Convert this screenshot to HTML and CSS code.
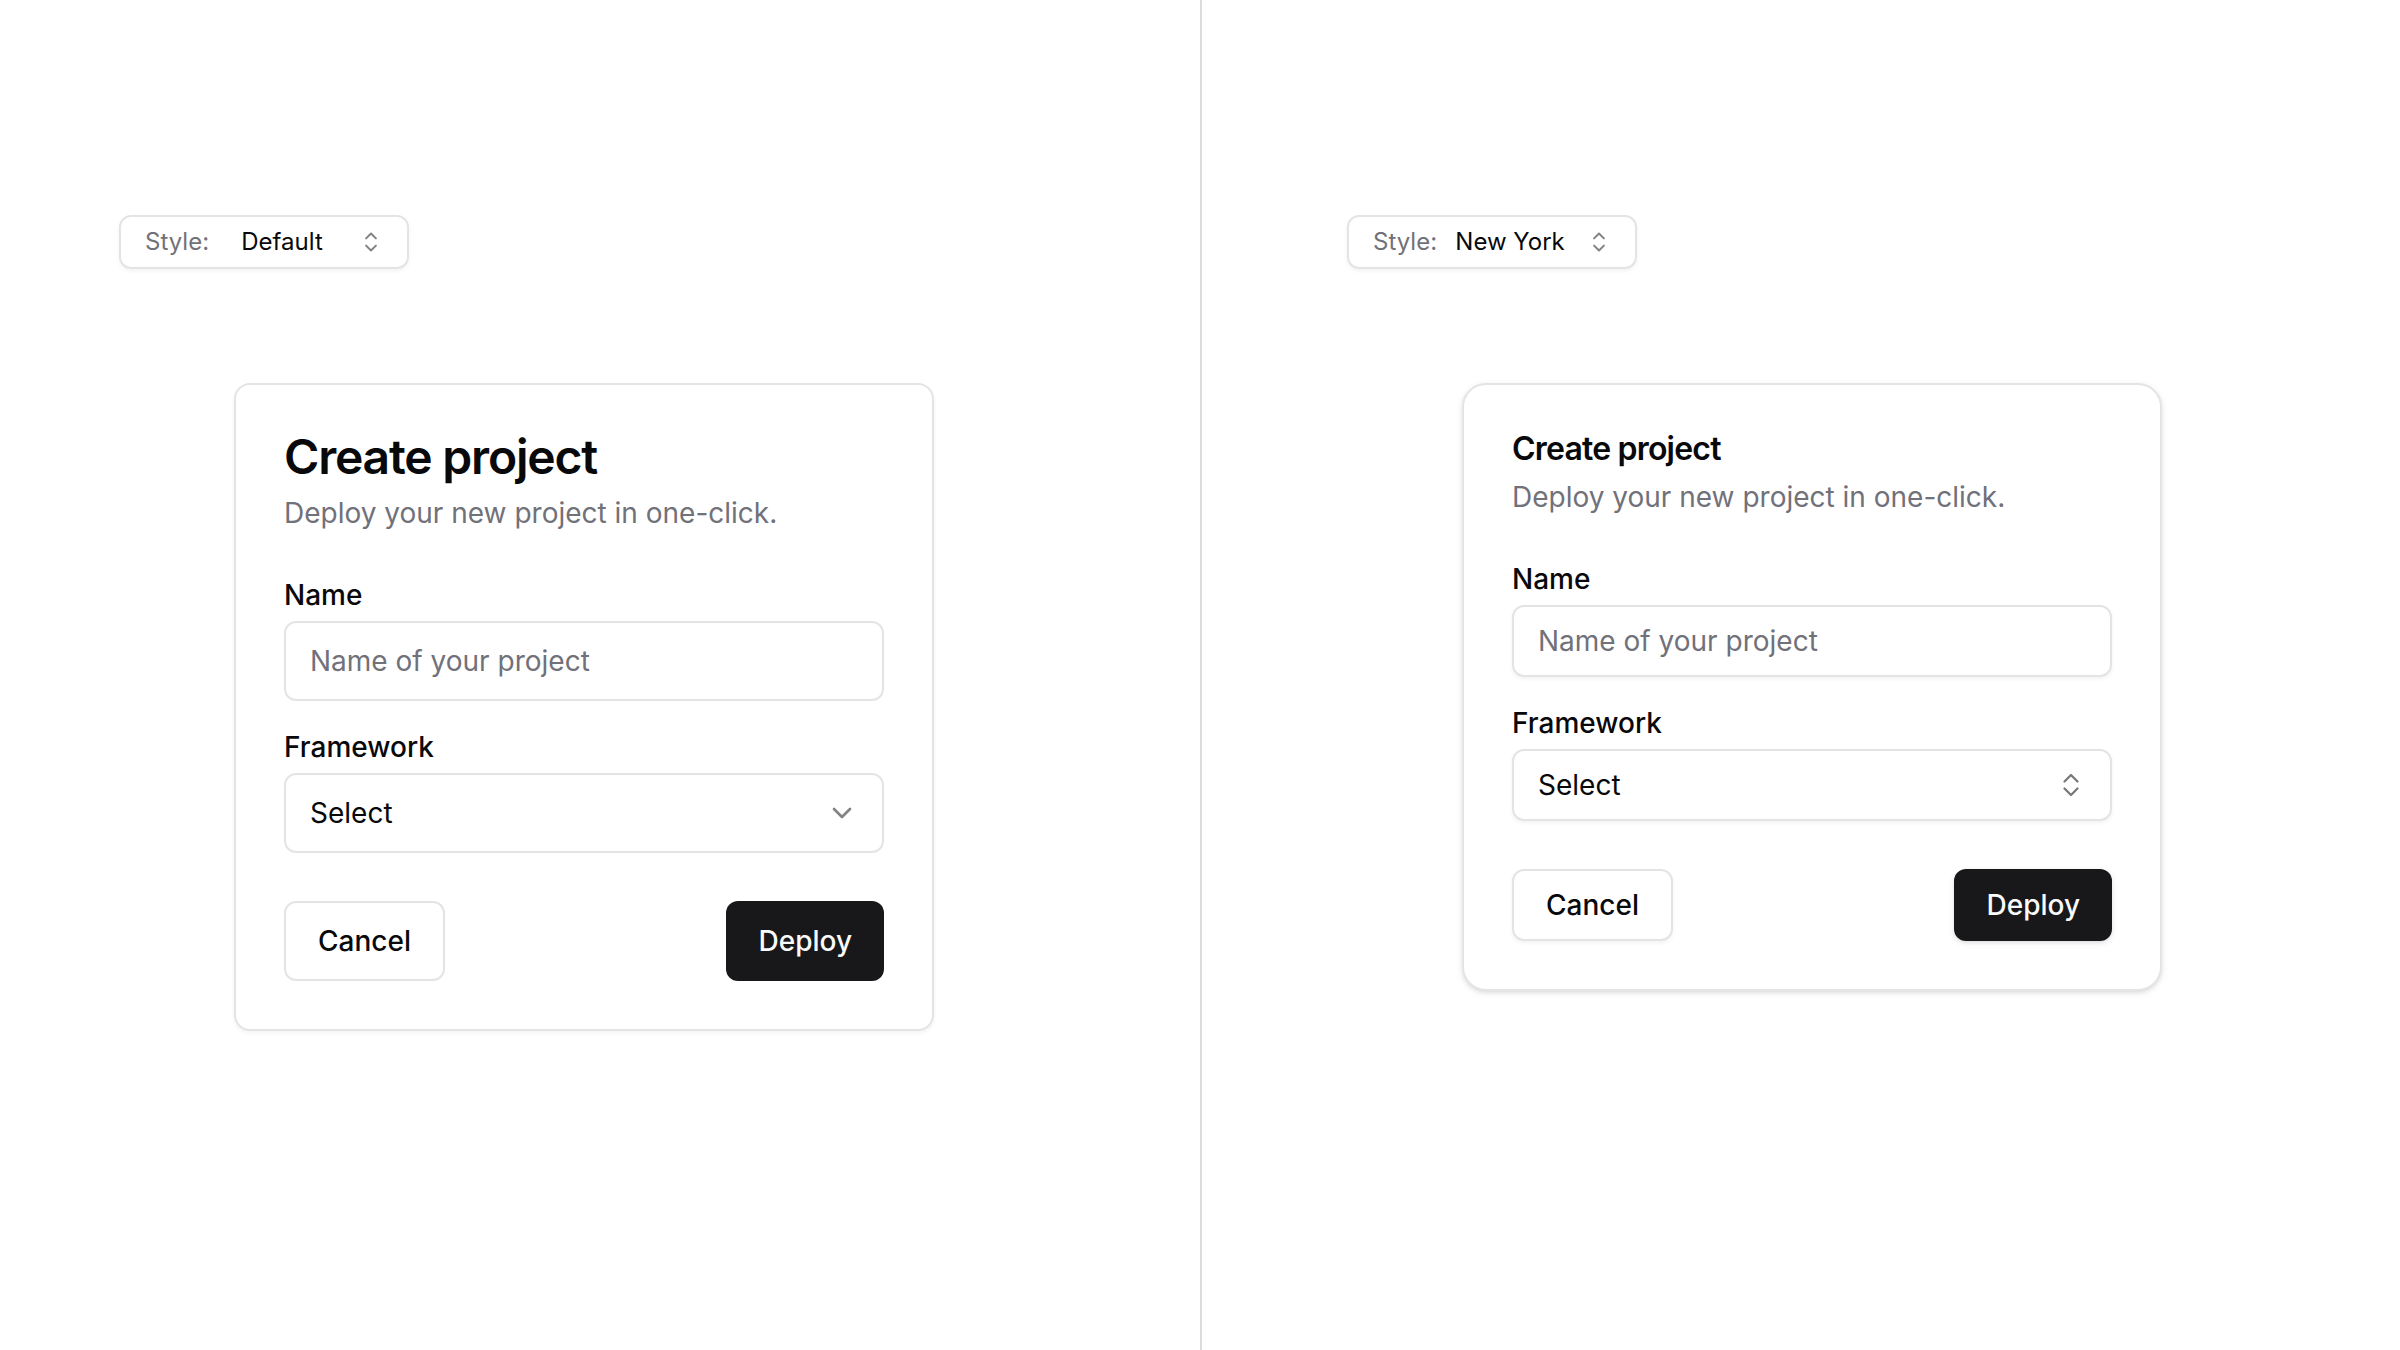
FILE: index.html
```html
<!DOCTYPE html>
<html lang="en">
<head>
<meta charset="utf-8">
<title>Style comparison</title>
<link rel="stylesheet" href="styles.css">
</head>
<body>
<main class="page">
  <section class="panel panel-left">
    <div class="switcher">
      <span class="switcher-label">Style:</span>
      <span class="switcher-value">Default</span>
      <svg class="caret-sort" viewBox="0 0 15 15" aria-hidden="true"><path d="M5.2 5.8 L7.5 3.5 L9.8 5.8 M5.2 9.2 L7.5 11.5 L9.8 9.2"/></svg>
    </div>
    <div class="card card-default">
      <div class="card-header">
        <h2 class="card-title">Create project</h2>
        <p class="card-desc">Deploy your new project in one-click.</p>
      </div>
      <form class="card-form">
        <div class="field">
          <label class="label">Name</label>
          <input class="input" type="text" placeholder="Name of your project">
        </div>
        <div class="field">
          <label class="label">Framework</label>
          <div class="select">
            <span>Select</span>
            <svg class="chevron" viewBox="0 0 24 24" aria-hidden="true"><path d="m6 9 6 6 6-6"/></svg>
          </div>
        </div>
      </form>
      <div class="card-footer">
        <button class="btn btn-outline" type="button">Cancel</button>
        <button class="btn btn-primary" type="button">Deploy</button>
      </div>
    </div>
  </section>
  <div class="divider"></div>
  <section class="panel panel-right">
    <div class="switcher">
      <span class="switcher-label">Style:</span>
      <span class="switcher-value">New York</span>
      <svg class="caret-sort" viewBox="0 0 15 15" aria-hidden="true"><path d="M5.2 5.8 L7.5 3.5 L9.8 5.8 M5.2 9.2 L7.5 11.5 L9.8 9.2"/></svg>
    </div>
    <div class="card card-ny">
      <div class="card-header">
        <h2 class="card-title">Create project</h2>
        <p class="card-desc">Deploy your new project in one-click.</p>
      </div>
      <form class="card-form">
        <div class="field">
          <label class="label">Name</label>
          <input class="input" type="text" placeholder="Name of your project">
        </div>
        <div class="field">
          <label class="label">Framework</label>
          <div class="select">
            <span>Select</span>
            <svg class="caret-big" viewBox="0 0 18 26" aria-hidden="true"><path d="M2.5 9.5 L9 3 L15.5 9.5 M2.5 16.5 L9 23 L15.5 16.5"/></svg>
          </div>
        </div>
      </form>
      <div class="card-footer">
        <button class="btn btn-outline" type="button">Cancel</button>
        <button class="btn btn-primary" type="button">Deploy</button>
      </div>
    </div>
  </section>
</main>
</body>
</html>
```
FILE: styles.css
```css
* { box-sizing: border-box; }
html, body { margin: 0; padding: 0; background: #ffffff; }
body {
  font-family: Inter, "Noto Sans", "Liberation Sans", sans-serif;
  color: #09090b;
  width: 2400px;
  height: 1350px;
  overflow: hidden;
}
.page {
  display: flex;
  width: 2400px;
  height: 1350px;
}
.panel {
  display: flex;
  flex-direction: column;
  align-items: flex-start;
  padding-top: 215px;
}
.panel-left { width: 1200px; padding-left: 119px; }
.panel-right { flex: 1; padding-left: 145px; }
.divider {
  width: 2px;
  height: 100%;
  background: #dcdce0;
  flex: none;
}

/* style switcher */
.switcher {
  width: 290px;
  height: 54px;
  display: flex;
  align-items: center;
  justify-content: space-between;
  padding: 0 20px 0 24px;
  border: 2px solid #e4e4e7;
  border-radius: 12px;
  box-shadow: 0 2px 4px rgba(0, 0, 0, 0.05);
  font-size: 24px;
  line-height: 32px;
}
.switcher-label { color: #71717a; }
.switcher-value { color: #09090b; }
.caret-sort {
  width: 32px;
  height: 32px;
  fill: none;
  stroke: #09090b;
  stroke-width: 0.95;
  stroke-linecap: round;
  stroke-linejoin: round;
  opacity: 0.5;
}
.caret-big {
  width: 18px;
  height: 26px;
  margin-right: 6px;
  fill: none;
  stroke: #09090b;
  stroke-width: 2.2;
  stroke-linecap: round;
  stroke-linejoin: round;
  opacity: 0.55;
}
.chevron {
  width: 32px;
  height: 32px;
  fill: none;
  stroke: #09090b;
  stroke-width: 2;
  stroke-linecap: round;
  stroke-linejoin: round;
  opacity: 0.5;
}

/* cards */
.card {
  width: 700px;
  margin-top: 114px;
  border: 2px solid #e4e4e7;
  background: #ffffff;
  padding: 48px;
  display: flex;
  flex-direction: column;
  gap: 48px;
}
.card-default {
  margin-left: 115px;
  border-radius: 16px;
  box-shadow: 0 2px 4px rgba(0, 0, 0, 0.05);
}
.card-ny {
  margin-left: 115px;
  border-radius: 24px;
  box-shadow: 0 2px 6px rgba(0, 0, 0, 0.1), 0 2px 4px -2px rgba(0, 0, 0, 0.1);
}
.card-header {
  display: flex;
  flex-direction: column;
  gap: 12px;
}
.card-title {
  margin: 0;
  font-weight: 600;
  letter-spacing: -0.025em;
}
.card-default .card-title { font-size: 48px; line-height: 48px; }
.card-ny .card-title { font-size: 32px; line-height: 32px; }
.card-desc {
  margin: 0;
  font-size: 28px;
  line-height: 40px;
  color: #71717a;
}
.card-form {
  display: flex;
  flex-direction: column;
  gap: 32px;
  margin: 0;
}
.field {
  display: flex;
  flex-direction: column;
  gap: 12px;
}
.label {
  font-size: 28px;
  line-height: 28px;
  font-weight: 500;
}
.input, .select {
  width: 100%;
  border: 2px solid #e4e4e7;
  border-radius: 12px;
  padding: 0 24px;
  font-family: inherit;
  font-size: 28px;
  color: #09090b;
  background: #ffffff;
  outline: none;
}
.input::placeholder { color: #71717a; opacity: 1; }
.select {
  display: flex;
  align-items: center;
  justify-content: space-between;
}
.card-default .input, .card-default .select { height: 80px; }
.card-ny .input, .card-ny .select {
  height: 72px;
  box-shadow: 0 2px 4px rgba(0, 0, 0, 0.05);
}
.card-footer {
  display: flex;
  justify-content: space-between;
  align-items: center;
}
.btn {
  font-family: inherit;
  font-size: 28px;
  font-weight: 500;
  padding: 0 32px;
  border-radius: 12px;
  cursor: pointer;
}
.card-default .btn { height: 80px; }
.card-ny .btn { height: 72px; }
.btn-outline {
  background: #ffffff;
  color: #09090b;
  border: 2px solid #e4e4e7;
}
.btn-primary {
  background: #18181b;
  color: #fafafa;
  border: none;
}
.card-ny .btn-outline { box-shadow: 0 2px 4px rgba(0, 0, 0, 0.05); }
.card-ny .btn-primary { box-shadow: 0 2px 6px rgba(0, 0, 0, 0.1), 0 2px 4px -2px rgba(0, 0, 0, 0.1); }
```
